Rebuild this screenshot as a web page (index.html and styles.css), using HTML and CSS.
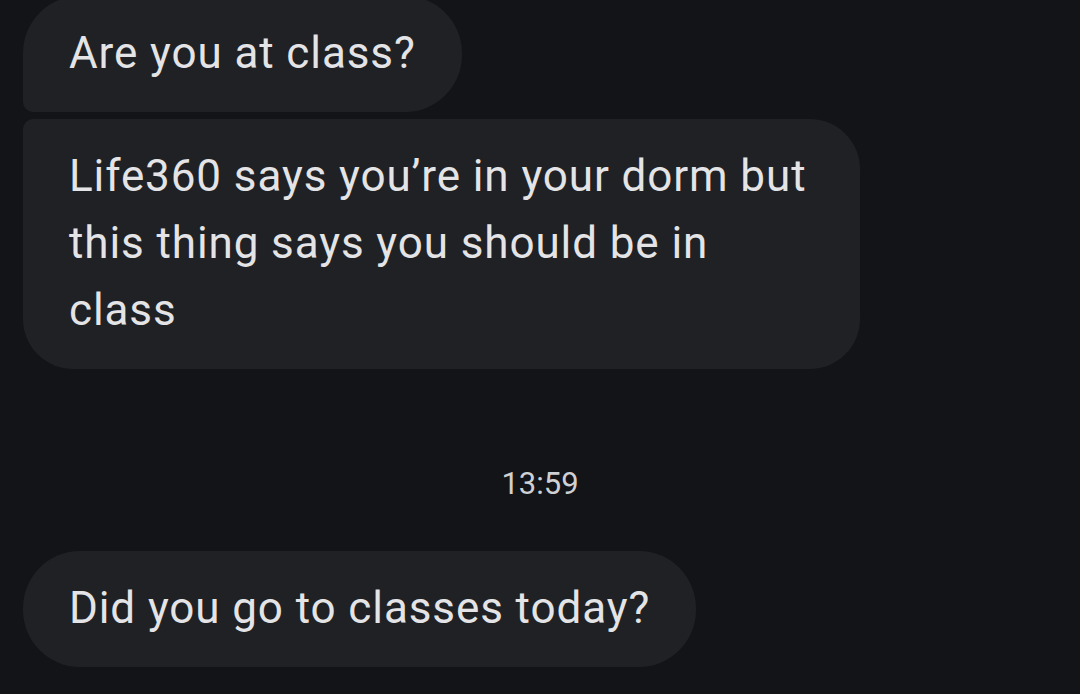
FILE: index.html
```html
<!DOCTYPE html>
<html lang="en">
<head>
<meta charset="utf-8">
<title>Messages</title>
<link rel="stylesheet" href="styles.css">
</head>
<body>
<main class="thread">
  <div class="group">
    <div class="bubble first">Are you at class?</div>
    <div class="bubble last">Life360 says you’re in your dorm but<br>this thing says you should be in<br>class</div>
  </div>
  <div class="stamp">13:59</div>
  <div class="group">
    <div class="bubble single">Did you go to classes today?</div>
  </div>
</main>
</body>
</html>
```

FILE: styles.css
```css
html, body {
  margin: 0;
  padding: 0;
  background: #121417;
  height: 100%;
  overflow: hidden;
}

.thread {
  display: flex;
  flex-direction: column;
  font-family: Roboto, "Noto Sans", sans-serif;
  color: #e4e4e7;
}

.group {
  display: flex;
  flex-direction: column;
  align-items: flex-start;
  gap: 7px;
  padding-left: 23px;
}

.group:first-child {
  margin-top: -4px;
}

.bubble {
  background: #1f2124;
  font-size: 44px;
  letter-spacing: 0.9px;
  line-height: 67px;
  padding: 24px 46px 25px 46px;
  border-radius: 57px;
}

.bubble.first {
  border-bottom-left-radius: 10px;
}

.bubble.last {
  border-radius: 10px 50px 50px 50px;
  padding-right: 54px;
}

.stamp {
  align-self: center;
  font-size: 31px;
  line-height: 40px;
  color: #cfd0d3;
  margin-top: 95px;
  margin-bottom: 47px;
}
```
